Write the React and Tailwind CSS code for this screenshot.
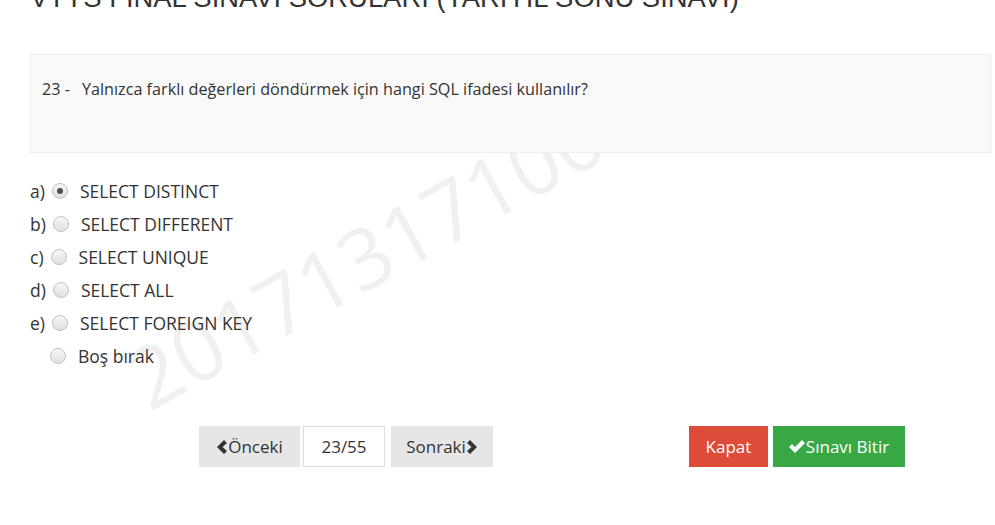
import React, { useState } from 'react';

const options = [
  { key: 'a)', text: 'SELECT DISTINCT' },
  { key: 'b)', text: 'SELECT DIFFERENT' },
  { key: 'c)', text: 'SELECT UNIQUE' },
  { key: 'd)', text: 'SELECT ALL' },
  { key: 'e)', text: 'SELECT FOREIGN KEY' },
  { key: '', text: 'Boş bırak' },
];

// Windows-like radio circle
const Radio = ({ checked }) => (
  <span className="w-[16px] h-[16px] rounded-full border border-[#c2c2c2] bg-gradient-to-b from-[#f6f6f6] to-[#e0e0e0] flex items-center justify-center shrink-0">
    {checked && <span className="w-[6px] h-[6px] rounded-full bg-[#4d4d4d]"></span>}
  </span>
);

const ChevronLeft = () => (
  <svg width="11" height="14" viewBox="0 0 11 14" className="mr-[1px]">
    <path d="M8 0 L11 3 L6.5 7 L11 11 L8 14 L1 7 Z" fill="#333" />
  </svg>
);

const ChevronRight = () => (
  <svg width="11" height="14" viewBox="0 0 11 14" className="ml-[1px]">
    <path d="M3 0 L0 3 L4.5 7 L0 11 L3 14 L10 7 Z" fill="#333" />
  </svg>
);

const Check = () => (
  <svg width="16" height="13" viewBox="0 0 16 13" className="mr-[1px]">
    <path d="M0 7 L3 4 L6 7 L13 0 L16 3 L6 13 Z" fill="#fff" />
  </svg>
);

const App = () => {
  const [selected, setSelected] = useState(0);

  return (
    <div className="relative w-[995px] h-[525px] overflow-hidden bg-white text-[#333]" style={{ fontFamily: '"Open Sans", sans-serif' }}>
      {/* Watermark, sits under the page content */}
      <div
        className="absolute z-0 left-[134px] top-[342px] text-[84px] leading-none text-[#f0f0f0] select-none origin-left -rotate-[29deg] whitespace-nowrap"
        style={{ fontFamily: '"Open Sans", sans-serif' }}
      >
        20171317100
      </div>

      <div className="relative z-10 pl-[30px]">
        {/* Title, mostly scrolled off */}
        <h1
          className="mt-[-16px] text-[27.4px] leading-none font-normal text-[#333] whitespace-nowrap"
          style={{ fontFamily: '"Liberation Sans", Arial, sans-serif' }}
        >
          VTYS FİNAL SINAVI SORULARI (YARIYIL SONU SINAVI)
        </h1>

        {/* Question */}
        <div className="mt-[43px] w-[961px] h-[99px] bg-[#f9f9f9] border border-[#eeeeee] px-[11px] pt-[22px] text-[16.2px]">
          <span>23 -</span>
          <span className="ml-[12px]">Yalnızca farklı değerleri döndürmek için hangi SQL ifadesi kullanılır?</span>
        </div>

        {/* Options */}
        <div className="mt-[21px] flex flex-col text-[17.5px]">
          {options.map((o, i) => (
            <label
              key={i}
              className="h-[33px] flex items-center cursor-pointer"
              onClick={() => setSelected(i)}
            >
              {o.key ? <span className="mr-[7px]">{o.key}</span> : <span className="w-[20px]"></span>}
              <Radio checked={selected === i} />
              <span className="ml-[12px]">{o.text}</span>
            </label>
          ))}
        </div>

        {/* Buttons */}
        <div className="mt-[54px] flex items-center text-[17px]">
          <div className="ml-[169px] flex items-center">
            <button className="w-[101px] h-[41px] bg-[#e6e6e6] flex items-center justify-center text-[#333]">
              <ChevronLeft />Önceki
            </button>
            <div className="ml-[3px] w-[82px] h-[41px] bg-white border border-[#dddddd] flex items-center justify-center">
              23/55
            </div>
            <button className="ml-[6px] w-[102px] h-[41px] bg-[#e6e6e6] flex items-center justify-center text-[#333]">
              Sonraki<ChevronRight />
            </button>
          </div>
          <div className="ml-[196px] flex items-center">
            <button className="w-[79px] h-[41px] bg-[#dd4b39] text-white flex items-center justify-center">
              Kapat
            </button>
            <button className="ml-[5px] w-[132px] h-[41px] bg-[#38a845] text-white flex items-center justify-center">
              <Check />Sınavı Bitir
            </button>
          </div>
        </div>
      </div>
    </div>
  );
};

export default App;
